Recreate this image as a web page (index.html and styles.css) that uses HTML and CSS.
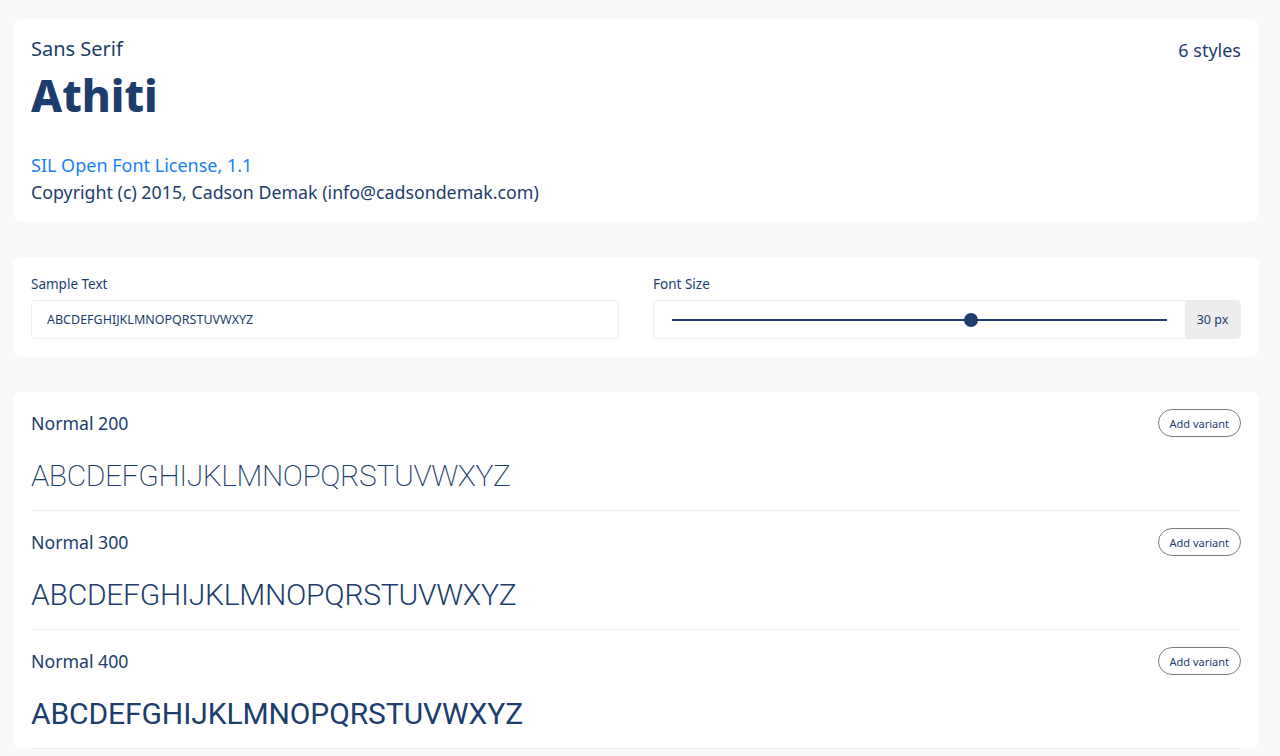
FILE: index.html
```html
<!DOCTYPE html>
<html>
    <head>
        <meta name="viewport" content="width=device-width" />
        <link rel="stylesheet" href="styles.css">
    </head>
    <body>
        <div class="f-page">
            <div class="f-card f-head">
                <div class="f-head-top">
                    <div>
                        <div class="f-category">Sans Serif</div>
                        <h1 class="f-name">Athiti</h1>
                    </div>
                    <div class="f-count">6 styles</div>
                </div>
                <a class="f-license" href="#">SIL Open Font License, 1.1</a>
                <div class="f-copy">Copyright (c) 2015, Cadson Demak (info@cadsondemak.com)</div>
            </div>

            <div class="f-card f-controls">
                <div class="f-field">
                    <label for="f-sample">Sample Text</label>
                    <input id="f-sample" class="f-input" type="text" value="ABCDEFGHIJKLMNOPQRSTUVWXYZ"/>
                </div>
                <div class="f-field">
                    <label for="f-size">Font Size</label>
                    <div class="f-range">
                        <div class="f-track">
                            <div class="f-line"></div>
                            <div class="f-thumb"></div>
                        </div>
                        <div class="f-unit">30 px</div>
                    </div>
                </div>
            </div>

            <div class="f-card f-list">
                <div class="f-row">
                    <div class="f-row-top">
                        <div class="f-style">Normal 200</div>
                        <button class="f-add">Add variant</button>
                    </div>
                    <div class="f-sample w200">ABCDEFGHIJKLMNOPQRSTUVWXYZ</div>
                </div>
                <div class="f-row">
                    <div class="f-row-top">
                        <div class="f-style">Normal 300</div>
                        <button class="f-add">Add variant</button>
                    </div>
                    <div class="f-sample w300">ABCDEFGHIJKLMNOPQRSTUVWXYZ</div>
                </div>
                <div class="f-row">
                    <div class="f-row-top">
                        <div class="f-style">Normal 400</div>
                        <button class="f-add">Add variant</button>
                    </div>
                    <div class="f-sample w400">ABCDEFGHIJKLMNOPQRSTUVWXYZ</div>
                </div>
            </div>
        </div>
    </body>
</html>
```

FILE: styles.css
```css
*{box-sizing: border-box;}
html, body {margin: 0; padding: 0;}
body {background-color: #f7f8fa; font-family: "Noto Sans", sans-serif; color: #1c3d6e; overflow: hidden;}

.f-page {padding: 19px 21px 0 13px; display: flex; flex-direction: column; gap: 35px;}
.f-card {background: #ffffff; border-radius: 9px; padding: 0 18px;}

.f-head {padding-top: 17px; padding-bottom: 19px; height: 203px;}
.f-head-top {display: flex; justify-content: space-between; align-items: flex-start;}
.f-category {font-size: 20px; line-height: 26px;}
.f-name {margin: 5px 0 0 0; font-size: 44px; line-height: 56px; font-weight: 800;}
.f-count {font-size: 18px; line-height: 24px; margin-top: 2px;}
.f-license {display: block; margin-top: 29px; color: #1a7ff5; text-decoration: none; font-size: 18px; line-height: 26px;}
.f-copy {font-size: 17.8px; line-height: 26px; margin-top: 1px;}

.f-controls {display: flex; gap: 34px; padding-top: 18px; padding-bottom: 18px; height: 100px;}
.f-field {flex: 1;}
.f-field label {display: block; font-size: 13.5px; line-height: 18px; margin-bottom: 7px;}
.f-input {display: block; width: 100%; height: 39px; border: 1px solid #ececec; border-radius: 4px; padding: 0 15px; font-family: "Noto Sans", sans-serif; font-size: 12.5px; color: #1c3d6e; outline: 0;}
.f-range {display: flex; height: 39px; border: 1px solid #ececec; border-radius: 4px; overflow: hidden;}
.f-track {flex: 1; position: relative; margin: 0 18px;}
.f-line {position: absolute; left: 0; right: 0; top: 18px; height: 2px; background: #1c3d6e;}
.f-thumb {position: absolute; left: 58.9%; top: 12px; width: 14px; height: 14px; border-radius: 50%; background: #1c3d6e;}
.f-unit {width: 55px; background: #ededed; display: flex; align-items: center; justify-content: center; font-size: 12.5px;}

.f-list {padding-top: 0;}
.f-row {border-bottom: 1px solid #eeeeee; height: 119px; padding-top: 17px;}
.f-row-top {display: flex; justify-content: space-between; align-items: center; height: 28px;}
.f-style {font-size: 17.7px;}
.f-add {height: 28px; padding: 0 11px; border: 1px solid #777c84; border-radius: 14px; background: #fff; color: #1c3d6e; font-family: "Noto Sans", sans-serif; font-size: 11px; cursor: pointer;}
.f-sample {margin-top: 21px; font-family: Roboto, sans-serif; font-size: 30px; line-height: 36px; white-space: nowrap;}
.w200 {font-weight: 200; letter-spacing: -0.4px;}
.w300 {font-weight: 300; letter-spacing: -0.25px;}
.w400 {font-weight: 400; letter-spacing: -0.1px;}
```
